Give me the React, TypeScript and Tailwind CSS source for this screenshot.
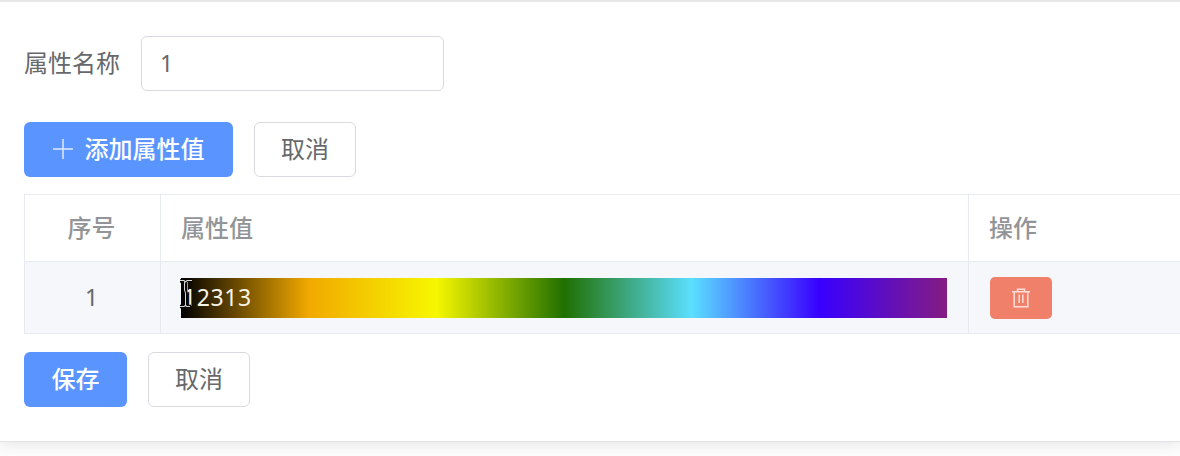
import type { ReactNode } from "react";

function Button({ primary = false, className = "", children }: { primary?: boolean; className?: string; children: ReactNode }) {
  const tone = primary ? "bg-[#5a95ff] font-medium text-white" : "border border-[#d8dae0] bg-white text-[#66686b]";
  return (
    <button type="button" className={`flex h-[55px] shrink-0 items-center justify-center rounded-[6px] pb-px ${tone} ${className}`}>
      {children}
    </button>
  );
}

function PlusIcon() {
  return (
    <svg width="20" height="20" viewBox="0 0 20 20" fill="none" stroke="currentColor" strokeWidth="1.5" className="mr-3 opacity-80">
      <path d="M10 0v20M0 10h20" />
    </svg>
  );
}

function TrashIcon() {
  return (
    <svg width="18" height="20" viewBox="0 0 18 20" fill="none" stroke="#ffdfd7" strokeWidth="1.5">
      <path d="M0 3.7h18M5.5 3.2V1.2h7v2M2.2 4v14.8h13.6V4" />
      <path d="M7.2 6.5v8.5M10.8 6.5v8.5" />
    </svg>
  );
}

function TextCursor() {
  return (
    <svg width="13" height="30" viewBox="0 0 13 30" fill="none" className="absolute -left-px top-px">
      <path d="M0 2h4l2 1 2-1h4M6 3v24M0 27.5h4l2-1 2 1h3" stroke="#050505" strokeWidth="3.5" />
      <path d="M0 1.5h4l1.5 1.5L7 1.5h5M0 27.5h4l1.5-1L7 27.5h3" stroke="#d5d5d5" strokeWidth="1.2" />
      <path d="M4.5 3v8l1 3v13" stroke="#d5d5d5" strokeWidth="1" />
      <path d="M7.5 3v10" stroke="#9a9a9a" strokeWidth="1" />
    </svg>
  );
}

export default function App() {
  return (
    <div className="h-[456px] w-full overflow-hidden bg-[#fdfdfd] font-['Noto_Sans','Noto_Sans_CJK_SC',sans-serif] text-[24px] leading-none text-[#66686b]">
      <main className="h-[441px] border-t-2 border-[#e8e8e9] bg-white pl-6 pt-[34px] shadow-[0_1px_1px_#e4e5eb,0_3px_14px_rgba(0,0,0,0.1)]">
        <div className="flex h-[55px] items-center">
          <label htmlFor="property-name" className="w-[117px] whitespace-nowrap pb-px">属性名称</label>
          <input
            id="property-name"
            defaultValue="1"
            className="h-[55px] w-[303px] rounded-[6px] border border-[#d8dae3] bg-white px-[18px] pb-0.5 text-[23px] outline-none"
          />
        </div>
        <div className="mt-[31px] flex gap-[21px]">
          <Button primary className="w-[209px]"><PlusIcon />添加属性值</Button>
          <Button className="w-[102px]">取消</Button>
        </div>
        <div className="mt-[17px] grid w-[1180px] grid-cols-[136px_808px_236px] grid-rows-[67px_72px] border-l border-t border-[#e7eaf0]">
          <div className="flex items-center justify-center border-b border-r border-[#e7eaf0] pr-0.5 font-medium text-[#929497]">序号</div>
          <div className="flex items-center border-b border-r border-[#e7eaf0] pl-5 font-medium text-[#929497]">属性值</div>
          <div className="flex items-center border-b border-[#e7eaf0] pl-5 font-medium text-[#929497]">操作</div>
          <div className="flex items-center justify-center border-b border-r border-[#e7eaf0] bg-[#f5f7fb] pr-0.5 text-[23px]">1</div>
          <div className="flex items-center border-b border-r border-[#e7eaf0] bg-[#f5f7fb] px-5">
            <div className="relative flex h-10 w-[766px] items-center bg-[linear-gradient(90deg,#000000,#f2a900_16.67%,#f7f700_33.33%,#207000_50%,#5adfff_66.67%,#3800ff_83.33%,#851c82)] pl-0.5 text-[23px] tracking-[0.6px] text-[#f6f3e8]">
              12313
              <TextCursor />
            </div>
          </div>
          <div className="flex items-center border-b border-[#e7eaf0] bg-[#f5f7fb] pl-[21px]">
            <button type="button" aria-label="删除" className="flex h-[42px] w-[62px] items-center justify-center rounded-[5px] bg-[#f08069]"><TrashIcon /></button>
          </div>
        </div>
        <div className="mt-[18px] flex gap-[21px]">
          <Button primary className="w-[103px]">保存</Button>
          <Button className="w-[102px]">取消</Button>
        </div>
      </main>
    </div>
  );
}
